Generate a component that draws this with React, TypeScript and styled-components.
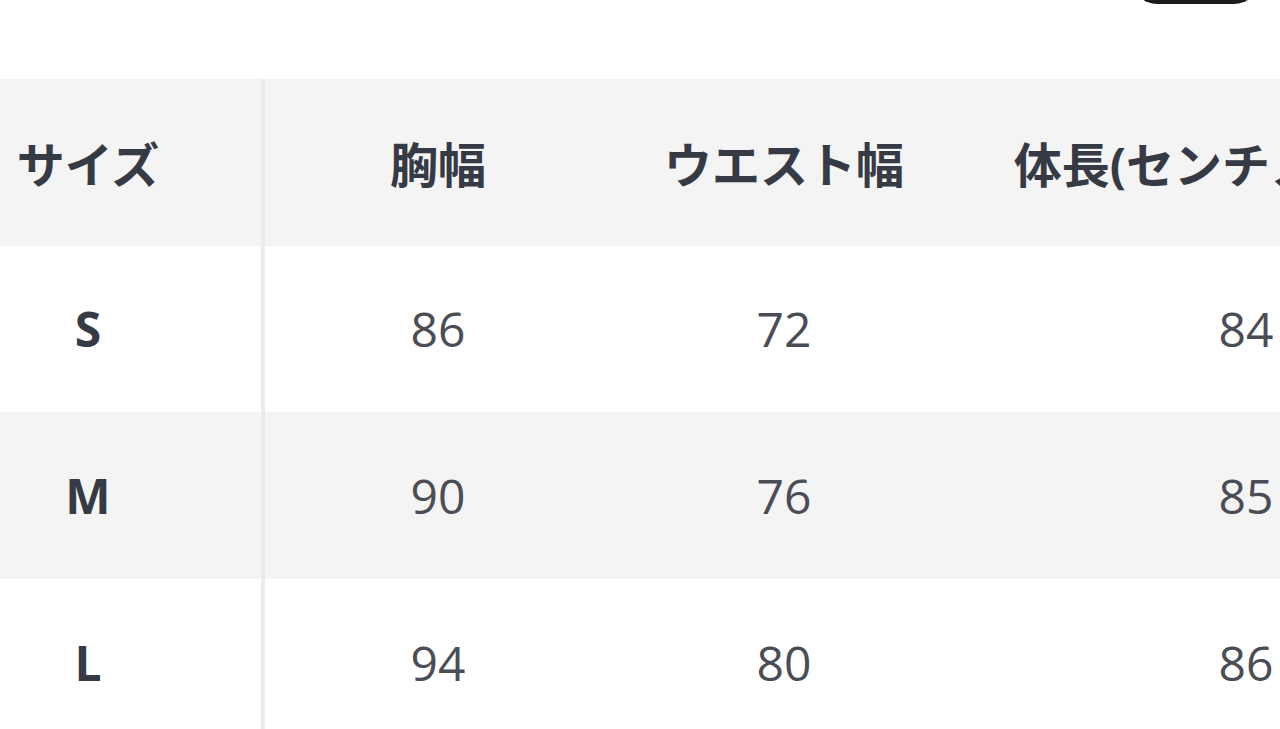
import React from "react";
import styled, { createGlobalStyle } from "styled-components";

const Global = createGlobalStyle`
  html, body { margin: 0; padding: 0; background: #ffffff; }
  body { font-family: "Open Sans", "Noto Sans CJK JP", sans-serif; }
  #root { width: 1280px; height: 729px; overflow: hidden; }
`;

const Page = styled.div`
  width: 1280px;
  height: 729px;
  overflow: hidden;
  display: flex;
  flex-direction: column;
`;

const TopBar = styled.div`
  height: 79px;
  flex: 0 0 79px;
  display: flex;
  justify-content: flex-end;
  align-items: flex-start;
  overflow: hidden;
  padding-right: 21px;
`;

const PillButton = styled.button`
  width: 127px;
  height: 50px;
  margin-top: -46px;
  border: none;
  border-radius: 25px;
  background: #1c1c1c;
`;

const Table = styled.table`
  border-collapse: collapse;
  table-layout: fixed;
  width: 1535px;
`;

const Row = styled.tr<{ $shade: boolean }>`
  height: 166.67px;
  background: ${(p) => (p.$shade ? "#f4f4f4" : "#ffffff")};
`;

const LabelCell = styled.td<{ $header?: boolean }>`
  width: 174px;
  padding: 0 85px 0 0;
  border-right: 4px solid #ebebeb;
  text-align: center;
  vertical-align: middle;
  font-family: ${(p) =>
    p.$header
      ? `"Noto Sans CJK JP", sans-serif`
      : `"Open Sans", "Noto Sans CJK JP", sans-serif`};
  font-weight: 700;
  font-size: 48px;
  color: #363a45;
  white-space: nowrap;
`;

const HeadCell = styled.td`
  text-align: center;
  vertical-align: middle;
  font-family: "Open Sans", "Noto Sans CJK JP", sans-serif;
  font-weight: 700;
  font-size: 48px;
  color: #363a45;
  white-space: nowrap;
  padding: 0;
  overflow: visible;
`;

const ValueCell = styled.td`
  text-align: center;
  vertical-align: middle;
  font-family: "Open Sans", sans-serif;
  font-weight: 400;
  font-size: 48px;
  color: #4a4d55;
  white-space: nowrap;
  padding: 0;
`;

const headers = ["胸幅", "ウエスト幅", "体長(センチメートル)"];
const rows = [
  { size: "S", values: ["86", "72", "84"] },
  { size: "M", values: ["90", "76", "85"] },
  { size: "L", values: ["94", "80", "86"] },
];

export default function App() {
  return (
    <Page>
      <Global />
      <TopBar>
        <PillButton aria-label="button" />
      </TopBar>
      <Table>
        <colgroup>
          <col style={{ width: 263 }} />
          <col style={{ width: 348 }} />
          <col style={{ width: 346 }} />
          <col style={{ width: 578 }} />
        </colgroup>
        <tbody>
          <Row $shade>
            <LabelCell $header>サイズ</LabelCell>
            {headers.map((h) => (
              <HeadCell key={h}>{h}</HeadCell>
            ))}
          </Row>
          {rows.map((r, i) => (
            <Row key={r.size} $shade={i % 2 === 1}>
              <LabelCell>{r.size}</LabelCell>
              {r.values.map((v, j) => (
                <ValueCell key={j}>{v}</ValueCell>
              ))}
            </Row>
          ))}
        </tbody>
      </Table>
    </Page>
  );
}
